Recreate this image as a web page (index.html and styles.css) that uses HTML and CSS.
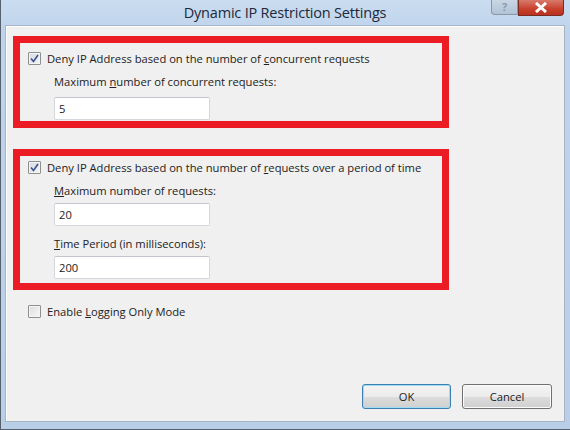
FILE: index.html
```html
<!DOCTYPE html>
<html lang="en">
<head>
  <meta charset="UTF-8" />
  <title>Dynamic IP Restriction Settings</title>
  <link rel="stylesheet" href="styles.css">
</head>
<body>
  <div class="window">
    <div class="titlebar">
      <span></span>
      <h1 class="title">Dynamic IP Restriction Settings</h1>
      <div class="caption-buttons">
        <span class="cap-help">?</span>
        <span class="cap-close">
          <svg width="14" height="11" viewBox="0 0 14 11"><path d="M2 1 L12 10 M12 1 L2 10" stroke="#fff" stroke-width="3"/></svg>
        </span>
      </div>
    </div>

    <div class="content">
      <div class="highlight box-one">
        <label class="check-row">
          <span class="checkbox checked">
            <svg width="9" height="9" viewBox="0 0 9 9"><path d="M1 4.5 L3.5 7.5 L8 1" fill="none" stroke="#3b4f8c" stroke-width="1.6"/></svg>
          </span>
          <span>Deny IP Address based on the number of <u>c</u>oncurrent requests</span>
        </label>
        <div class="field">
          <div class="field-label">Maximum <u>n</u>umber of concurrent requests:</div>
          <div class="textbox">5</div>
        </div>
      </div>

      <div class="highlight box-two">
        <label class="check-row">
          <span class="checkbox checked">
            <svg width="9" height="9" viewBox="0 0 9 9"><path d="M1 4.5 L3.5 7.5 L8 1" fill="none" stroke="#3b4f8c" stroke-width="1.6"/></svg>
          </span>
          <span>Deny IP Address based on the number of <u>r</u>equests over a period of time</span>
        </label>
        <div class="field">
          <div class="field-label"><u>M</u>aximum number of requests:</div>
          <div class="textbox">20</div>
        </div>
        <div class="field">
          <div class="field-label"><u>T</u>ime Period (in milliseconds):</div>
          <div class="textbox">200</div>
        </div>
      </div>

      <label class="check-row logging">
        <span class="checkbox"></span>
        <span>Enable <u>L</u>ogging Only Mode</span>
      </label>

      <div class="button-bar">
        <button class="btn btn-default">OK</button>
        <button class="btn">Cancel</button>
      </div>
    </div>
  </div>
</body>
</html>
```

FILE: styles.css
```css
:root {
  --frame: #c3d7ed;
  --panel: #f0f0f0;
  --red: #ec1c24;
  --text: #222;
}
html, body {
  margin: 0;
  padding: 0;
}
body {
  width: 570px;
  height: 430px;
  overflow: hidden;
  font-family: 'Open Sans', 'Noto Sans', sans-serif;
  font-size: 11.2px;
  color: var(--text);
  background: #4b5866;
}
.window {
  box-sizing: border-box;
  width: 570px;
  height: 430px;
  display: flex;
  flex-direction: column;
  border-left: 1px solid #56616d;
  border-bottom: 1px solid #56616d;
  background: linear-gradient(to bottom, #cadcf0 0, #bfd4ec 30px, #b9cfe8 100%);
  padding: 0 5px 7px 4px;
}
.titlebar {
  height: 25px;
  display: grid;
  grid-template-columns: 1fr auto 1fr;
  align-items: start;
}
.title {
  margin: 0;
  padding-top: 3px;
  font-size: 14.5px;
  font-weight: normal;
  color: #1c2a3a;
  letter-spacing: -0.2px;
}
.caption-buttons {
  justify-self: end;
  display: flex;
  margin-right: 1px;
}
.cap-help {
  width: 27px;
  height: 15px;
  box-sizing: border-box;
  border: 1px solid #8b97a6;
  border-top: none;
  border-radius: 0 0 0 4px;
  background: linear-gradient(to bottom, #c9d6e4, #b3c3d6);
  color: #8a9bb0;
  font-size: 11px;
  font-weight: bold;
  text-align: center;
  line-height: 13px;
}
.cap-close {
  width: 46px;
  height: 16px;
  box-sizing: border-box;
  border: 1px solid #7a2a20;
  border-top: none;
  border-radius: 0 0 4px 0;
  background: linear-gradient(to bottom, #d87a6c, #c8402c 60%, #b8301f);
  display: flex;
  align-items: center;
  justify-content: center;
}
.content {
  flex: 1;
  display: flex;
  flex-direction: column;
  background: var(--panel);
  border: 1px solid #a7b4c3;
  box-shadow: inset 1px 1px 0 #fff;
  padding: 10px 12px 12px 7px;
}
.highlight {
  width: 436px;
  box-sizing: border-box;
  border: 7px solid var(--red);
  padding: 7px 0 0 8px;
}
.box-one {
  height: 92px;
}
.box-two {
  height: 141px;
  margin-top: 21px;
  padding-top: 3px;
}
.check-row {
  display: flex;
  align-items: center;
  height: 16px;
  gap: 6px;
}
.checkbox {
  width: 13px;
  height: 13px;
  box-sizing: border-box;
  border: 1px solid #8e8f8f;
  border-radius: 1px;
  background: linear-gradient(135deg, #dcdcdc, #f8f8f8);
  box-shadow: inset 0 0 0 1px #f4f4f4;
  display: flex;
  align-items: center;
  justify-content: center;
}
.checkbox.checked {
  background: linear-gradient(135deg, #d6d9e0, #f4f5f7);
}
.field {
  padding-left: 26px;
  margin-top: 8px;
}
.field-label {
  height: 16px;
  line-height: 16px;
}
.textbox {
  box-sizing: border-box;
  width: 156px;
  height: 23px;
  margin-top: 7px;
  background: #fff;
  border: 1px solid #d4d8dd;
  border-top-color: #c2c6cc;
  border-radius: 2px;
  padding: 0 0 0 4px;
  line-height: 21px;
}
.box-two .textbox {
  margin-top: 4px;
}
.box-two .field + .field {
  margin-top: 10px;
}
.logging {
  margin: 13px 0 0 15px;
}
.button-bar {
  margin-top: auto;
  display: flex;
  justify-content: flex-end;
  gap: 11px;
}
.btn {
  width: 90px;
  height: 25px;
  font-family: inherit;
  font-size: 11.2px;
  color: var(--text);
  border: 1px solid #707070;
  border-radius: 3px;
  background: linear-gradient(to bottom, #f4f4f4 0, #ebebeb 50%, #dddddd 51%, #cfcfcf 100%);
  box-shadow: inset 0 0 0 1px #fbfbfb;
}
.btn-default {
  width: 89px;
  border-color: #3c7fb1;
  box-shadow: inset 0 0 0 1px #9fdcf6;
}
```
